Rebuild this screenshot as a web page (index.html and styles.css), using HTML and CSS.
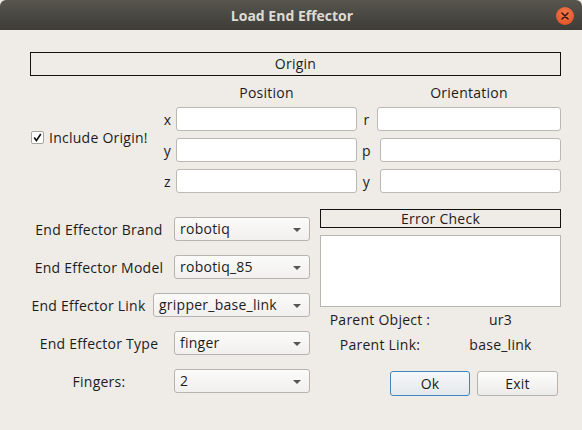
FILE: index.html
```html
<!DOCTYPE html>
<html>
<head>
<meta charset="utf-8">
<link rel="stylesheet" href="styles.css">
</head>
<body>
<div class="window">
  <div class="titlebar">
    <span class="title">Load End Effector</span>
    <span class="close"><svg width="8" height="8" viewBox="0 0 8 8"><path d="M1 1L7 7M7 1L1 7" stroke="#3a1a10" stroke-width="1.6" stroke-linecap="round"/></svg></span>
  </div>
  <div class="content">
    <div class="section-header origin-header">Origin</div>
    <div class="origin-body">
      <label class="check"><span class="box"><svg width="11" height="11" viewBox="0 0 11 11"><path d="M2.2 5.6L4.4 8.6L8.8 2" fill="none" stroke="#111" stroke-width="1.7"/></svg></span><span>Include Origin!</span></label>
      <div class="coords">
        <div></div><div class="col-head">Position</div><div></div><div class="col-head">Orientation</div>
        <div class="axis">x</div><div class="field"></div><div class="axis">r</div><div class="field"></div>
        <div class="axis">y</div><div class="field"></div><div class="axis">p</div><div class="field shift"></div>
        <div class="axis">z</div><div class="field"></div><div class="axis">y</div><div class="field shift"></div>
      </div>
    </div>
    <div class="lower">
      <div class="form">
        <div class="row"><span class="lbl">End Effector Brand</span><div class="combo">robotiq</div></div>
        <div class="row"><span class="lbl">End Effector Model</span><div class="combo">robotiq_85</div></div>
        <div class="row"><span class="lbl">End Effector Link</span><div class="combo wide">gripper_base_link</div></div>
        <div class="row"><span class="lbl">End Effector Type</span><div class="combo">finger</div></div>
        <div class="row"><span class="lbl">Fingers:</span><div class="combo">2</div></div>
      </div>
      <div class="side">
        <div class="section-header err-header">Error Check</div>
        <div class="textbox"></div>
        <div class="info">
          <span>Parent Object :</span><span>ur3</span>
          <span>Parent Link:</span><span>base_link</span>
        </div>
        <div class="buttons">
          <button class="btn default">Ok</button>
          <button class="btn">Exit</button>
        </div>
      </div>
    </div>
  </div>
</div>
</body>
</html>
```

FILE: styles.css
```css
* { box-sizing: border-box; }
html, body {
  margin: 0;
  padding: 0;
  background: #efebe7;
}
body {
  font-family: "Open Sans", "DejaVu Sans", sans-serif;
  font-size: 14px;
  letter-spacing: 0.25px;
  color: #1c1c1c;
}
.window {
  width: 582px;
  height: 430px;
  background: #efebe7;
  overflow: hidden;
}
.titlebar {
  height: 30px;
  background: linear-gradient(#57554e, #3d3c37);
  border-radius: 6px 6px 0 0;
  display: flex;
  align-items: center;
  justify-content: center;
  position: relative;
  letter-spacing: 0;
}
.title {
  color: #dfdbd2;
  font-weight: bold;
  font-size: 14px;
  margin-left: 2px;
}
.close {
  position: absolute;
  right: 8px;
  top: 7px;
  width: 18px;
  height: 18px;
  border-radius: 50%;
  background: radial-gradient(circle at 50% 35%, #f47a4f, #df4a1f);
  display: flex;
  align-items: center;
  justify-content: center;
}
.content {
  padding: 22px 21px 0 30px;
}
.section-header {
  border: 1px solid #111;
  text-align: center;
  background: #efebe7;
}
.origin-header {
  height: 24px;
  line-height: 22px;
}
.origin-body {
  display: flex;
  align-items: center;
  margin-top: 8px;
}
.check {
  display: flex;
  align-items: center;
  width: 130px;
  margin-top: -2px;
}
.box {
  width: 13px;
  height: 13px;
  border: 1px solid #a9a6a1;
  background: #fff;
  border-radius: 2px;
  display: flex;
  align-items: center;
  justify-content: center;
  margin-left: 1px;
  margin-right: 5px;
}
.coords {
  display: grid;
  grid-template-columns: 16px 181px 20px 184px;
  grid-template-rows: 16px 24px 24px 24px;
  row-gap: 7px;
  align-items: center;
}
.col-head {
  text-align: center;
}
.axis {
  text-align: center;
  padding-right: 1px;
}
.field {
  height: 24px;
  background: #fff;
  border: 1px solid #bcb9b4;
  border-radius: 3px;
}
.field.shift {
  margin-left: 3px;
}
.lower {
  display: flex;
  margin-top: 16px;
}
.form {
  width: 280px;
  display: flex;
  flex-direction: column;
  gap: 14px;
  padding-top: 8px;
}
.row {
  display: flex;
  align-items: center;
  height: 24px;
}
.lbl {
  flex: 1;
  text-align: center;
  white-space: nowrap;
}
.combo {
  width: 136px;
  height: 24px;
  margin-left: 6px;
  border: 1px solid #b7b4af;
  border-radius: 3px;
  background: linear-gradient(#fbfbfa, #f1f0ef);
  padding-left: 5px;
  line-height: 22px;
  position: relative;
}
.combo.wide {
  width: 157px;
}
.combo::after {
  content: "";
  position: absolute;
  right: 8px;
  top: 10px;
  border-left: 4px solid transparent;
  border-right: 4px solid transparent;
  border-top: 4px solid #555;
}
.side {
  width: 241px;
  margin-left: 10px;
}
.err-header {
  height: 19px;
  line-height: 17px;
}
.textbox {
  height: 72px;
  margin-top: 7px;
  background: #fff;
  border: 1px solid #b9b6b2;
}
.info {
  display: grid;
  grid-template-columns: 120px 121px;
  grid-auto-rows: 25px;
  align-items: center;
  text-align: center;
}
.buttons {
  display: flex;
  justify-content: flex-end;
  gap: 7px;
  margin-top: 14px;
  margin-right: 3px;
}
.btn {
  width: 81px;
  height: 25px;
  font-family: inherit;
  font-size: 14px;
  letter-spacing: 0.25px;
  color: #1c1c1c;
  border: 1px solid #b7b4af;
  border-radius: 3px;
  background: linear-gradient(#fdfdfc, #ecebe9);
  padding: 0;
}
.btn.default {
  width: 80px;
  border-color: #3f86c0;
  background: linear-gradient(#f6f8fa, #e3e8ec);
}
```
